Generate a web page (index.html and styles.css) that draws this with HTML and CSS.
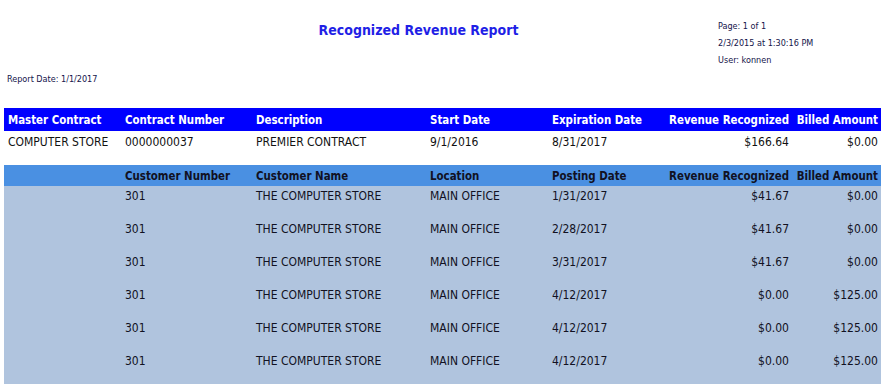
FILE: index.html
```html
<!DOCTYPE html>
<html>
<head>
<meta charset="utf-8">
<link rel="stylesheet" href="styles.css">
</head>
<body>
<div class="page">
  <div class="top">
    <div class="spacer"></div>
    <h1 class="title">Recognized Revenue Report</h1>
    <div class="meta">
      <div>Page: 1 of 1</div>
      <div>2/3/2015 at 1:30:16 PM</div>
      <div>User: konnen</div>
    </div>
  </div>
  <div class="report-date">Report Date: 1/1/2017</div>
  <table class="report">
    <colgroup>
      <col class="c1"><col class="c2"><col class="c3"><col class="c4"><col class="c5"><col class="c6"><col class="c7">
    </colgroup>
    <tr class="head">
      <th>Master Contract</th>
      <th>Contract Number</th>
      <th>Description</th>
      <th>Start Date</th>
      <th>Expiration Date</th>
      <th class="num">Revenue Recognized</th>
      <th class="num">Billed Amount</th>
    </tr>
    <tr class="contract">
      <td>COMPUTER STORE</td>
      <td>0000000037</td>
      <td>PREMIER CONTRACT</td>
      <td>9/1/2016</td>
      <td>8/31/2017</td>
      <td class="num">$166.64</td>
      <td class="num">$0.00</td>
    </tr>
    <tr class="subhead">
      <th></th>
      <th>Customer Number</th>
      <th>Customer Name</th>
      <th>Location</th>
      <th>Posting Date</th>
      <th class="num">Revenue Recognized</th>
      <th class="num">Billed Amount</th>
    </tr>
    <tr class="detail">
      <td></td><td>301</td><td>THE COMPUTER STORE</td><td>MAIN OFFICE</td><td>1/31/2017</td><td class="num">$41.67</td><td class="num">$0.00</td>
    </tr>
    <tr class="detail">
      <td></td><td>301</td><td>THE COMPUTER STORE</td><td>MAIN OFFICE</td><td>2/28/2017</td><td class="num">$41.67</td><td class="num">$0.00</td>
    </tr>
    <tr class="detail">
      <td></td><td>301</td><td>THE COMPUTER STORE</td><td>MAIN OFFICE</td><td>3/31/2017</td><td class="num">$41.67</td><td class="num">$0.00</td>
    </tr>
    <tr class="detail">
      <td></td><td>301</td><td>THE COMPUTER STORE</td><td>MAIN OFFICE</td><td>4/12/2017</td><td class="num">$0.00</td><td class="num">$125.00</td>
    </tr>
    <tr class="detail">
      <td></td><td>301</td><td>THE COMPUTER STORE</td><td>MAIN OFFICE</td><td>4/12/2017</td><td class="num">$0.00</td><td class="num">$125.00</td>
    </tr>
    <tr class="detail">
      <td></td><td>301</td><td>THE COMPUTER STORE</td><td>MAIN OFFICE</td><td>4/12/2017</td><td class="num">$0.00</td><td class="num">$125.00</td>
    </tr>
  </table>
</div>
</body>
</html>
```
FILE: styles.css
```css
html, body {
  margin: 0;
  padding: 0;
  background: #ffffff;
}
.page {
  font-family: "DejaVu Sans Condensed", "DejaVu Sans", sans-serif;
  color: #111122;
  width: 885px;
}
.top {
  display: grid;
  grid-template-columns: 119px 599px 1fr;
  padding-top: 18px;
}
.title {
  margin: 0;
  padding-top: 3px;
  text-align: center;
  font-size: 14px;
  font-weight: bold;
  color: #1f1fe6;
  line-height: 18px;
}
.meta {
  font-size: 9px;
  line-height: 17px;
  color: #14144a;
}
.report-date {
  font-size: 9px;
  line-height: 12px;
  color: #14144a;
  padding: 4px 0 0 7px;
}
.report {
  margin: 23px 0 0 4px;
  width: 877px;
  border-collapse: collapse;
  table-layout: fixed;
  font-size: 12px;
}
.c1 { width: 117px; }
.c2 { width: 131px; }
.c3 { width: 174px; }
.c4 { width: 122px; }
.c5 { width: 112px; }
.c6 { width: 132px; }
.c7 { width: 89px; }
.report th, .report td {
  padding-top: 0;
  padding-bottom: 0;
  padding-left: 4px;
  padding-right: 0;
  text-align: left;
  white-space: nowrap;
  overflow: visible;
}
.report .num {
  text-align: right;
  padding-left: 0;
  padding-right: 3px;
}
.head {
  background: #0000ff;
  color: #ffffff;
  height: 23px;
}
.head th,
.subhead th {
  font-weight: bold;
  font-size: 11.4px;
}
.report .contract td {
  height: 22px;
  padding-bottom: 12px;
  color: #111111;
}
.subhead {
  background: #4a90e2;
  height: 21px;
}
.subhead th {
  color: #111122;
}
.detail {
  background: #b0c4de;
}
.report .detail td {
  height: 18px;
  padding-top: 3px;
  padding-bottom: 12px;
  color: #111122;
  vertical-align: top;
}
```
